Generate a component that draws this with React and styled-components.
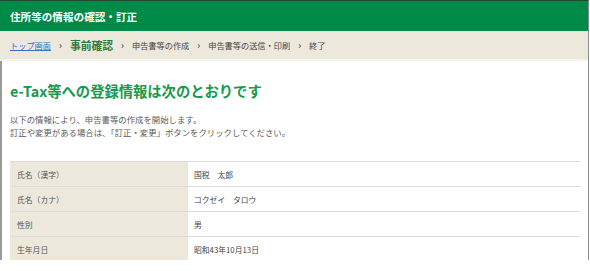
import React from "react";
import styled, { createGlobalStyle } from "styled-components";

const GlobalStyle = createGlobalStyle`
  html, body { margin: 0; padding: 0; background: #ffffff; }
  body { font-family: "Noto Sans CJK JP", "Noto Sans", sans-serif; }
  * { box-sizing: border-box; }
`;

const Frame = styled.div`
  width: 589px;
  height: 260px;
  overflow: hidden;
  border-top: 1px solid #1f4a35;
  border-right: 1px solid #8c8c8c;
  display: flex;
  flex-direction: column;
`;

const Header = styled.div`
  height: 30px;
  flex: none;
  background: #008a47;
  color: #ffffff;
  font-size: 10.6px;
  font-weight: 700;
  display: flex;
  align-items: center;
  padding: 0 10px;
`;

const Breadcrumb = styled.nav`
  height: 30px;
  flex: none;
  background: #ece9dc;
  border-bottom: 2px solid #f5f3ec;
  display: flex;
  align-items: center;
  padding: 0 10px;
  gap: 7px;
  font-size: 8.3px;
  color: #444;
`;

const Crumb = styled.span`
  line-height: 1;
  color: ${(p) => (p.$current ? "#2b7a3b" : "#444")};
  font-size: ${(p) => (p.$current ? "10.8px" : "8.2px")};
  font-weight: ${(p) => (p.$current ? 700 : 400)};
`;

const CrumbLink = styled.a`
  line-height: 1;
  color: #3a6fc4;
  text-decoration: underline;
  font-size: 8.2px;
`;

const Sep = styled.span`
  color: #555;
  font-size: 9px;
  font-weight: 700;
  line-height: 1;
  padding: 0 1px;
`;

const Main = styled.main`
  flex: 1;
  border-left: 2px solid #9a9a9a;
  padding: 0 7px 0 8px;
`;

const Title = styled.h1`
  margin: 20px 0 0;
  font-size: 14.3px;
  line-height: 20px;
  font-weight: 700;
  color: #169a4d;
`;

const Lead = styled.p`
  margin: 12px 0 0;
  font-size: 8.4px;
  line-height: 13px;
  color: #5a5a5a;
`;

const Table = styled.div`
  margin-top: 22px;
  width: 570px;
  border-top: 1px solid #dcdcdc;
`;

const Row = styled.div`
  display: grid;
  grid-template-columns: 178px 1fr;
  height: 25px;
  border-bottom: 1px solid #dcdcdc;
`;

const Label = styled.div`
  background: #ece9dc;
  display: flex;
  align-items: center;
  padding-left: 7px;
  font-size: 7.8px;
  color: #555;
`;

const Value = styled.div`
  display: flex;
  align-items: center;
  padding-left: 6px;
  font-size: 7.8px;
  color: #444;
`;

const rows = [
  ["氏名（漢字）", "国税　太郎"],
  ["氏名（カナ）", "コクゼイ　タロウ"],
  ["性別", "男"],
  ["生年月日", "昭和43年10月13日"],
];

export default function App() {
  return (
    <>
      <GlobalStyle />
      <Frame>
        <Header>住所等の情報の確認・訂正</Header>
        <Breadcrumb>
          <CrumbLink href="#">トップ画面</CrumbLink>
          <Sep>›</Sep>
          <Crumb $current>事前確認</Crumb>
          <Sep>›</Sep>
          <Crumb>申告書等の作成</Crumb>
          <Sep>›</Sep>
          <Crumb>申告書等の送信・印刷</Crumb>
          <Sep>›</Sep>
          <Crumb>終了</Crumb>
        </Breadcrumb>
        <Main>
          <Title>e-Tax等への登録情報は次のとおりです</Title>
          <Lead>
            以下の情報により、申告書等の作成を開始します。
            <br />
            訂正や変更がある場合は、「訂正・変更」ボタンをクリックしてください。
          </Lead>
          <Table>
            {rows.map(([k, v]) => (
              <Row key={k}>
                <Label>{k}</Label>
                <Value>{v}</Value>
              </Row>
            ))}
          </Table>
        </Main>
      </Frame>
    </>
  );
}
